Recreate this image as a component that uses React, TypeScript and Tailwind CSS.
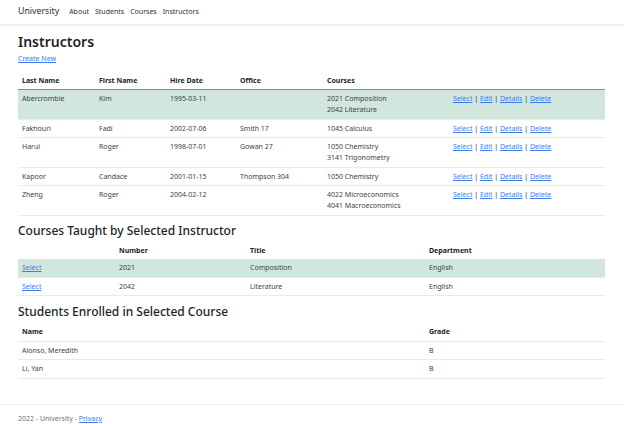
const instructors = [
  { last: 'Abercrombie', first: 'Kim', hired: '1995-03-11', office: '', courses: ['2021 Composition', '2042 Literature'], selected: true },
  { last: 'Fakhouri', first: 'Fadi', hired: '2002-07-06', office: 'Smith 17', courses: ['1045 Calculus'] },
  { last: 'Harui', first: 'Roger', hired: '1998-07-01', office: 'Gowan 27', courses: ['1050 Chemistry', '3141 Trigonometry'] },
  { last: 'Kapoor', first: 'Candace', hired: '2001-01-15', office: 'Thompson 304', courses: ['1050 Chemistry'] },
  { last: 'Zheng', first: 'Roger', hired: '2004-02-12', office: '', courses: ['4022 Microeconomics', '4041 Macroeconomics'] },
]

const courses = [
  { number: '2021', title: 'Composition', department: 'English', selected: true },
  { number: '2042', title: 'Literature', department: 'English' },
]

const students = [
  { name: 'Alonso, Meredith', grade: 'B' },
  { name: 'Li, Yan', grade: 'B' },
]

const cell = 'px-[4px] py-[3.25px] align-top leading-[11px]'
const head = 'px-[4px] py-[3.25px] text-left align-bottom font-bold leading-[11px] text-[#212529]'
const link = 'text-[#3b7bf0] underline'

function Actions() {
  return (
    <span className="text-[#212529]">
      <a className={link} href="#">Select</a> | <a className={link} href="#">Edit</a> |{' '}
      <a className={link} href="#">Details</a> | <a className={link} href="#">Delete</a>
    </span>
  )
}

export default function App() {
  return (
    <div className="flex flex-col bg-white text-[7px] text-[#3a3f44] [font-family:'Noto_Sans',sans-serif]">
      <nav className="flex h-[25px] items-center gap-[10px] border-b border-[#ececec] px-[18px] shadow-[0_1px_3px_rgba(0,0,0,0.06)]">
        <span className="text-[8.75px] text-[#2b2f33]">University</span>
        <div className="flex gap-[6px] text-[7px] text-[#2b2f33]">
          <span>About</span>
          <span>Students</span>
          <span>Courses</span>
          <span>Instructors</span>
        </div>
      </nav>

      <main className="mx-[18px] w-[587px]">
        <h1 className="mt-[7px] text-[14px] font-semibold leading-[19px] text-[#212529]">Instructors</h1>
        <a className={`mt-[1.5px] block leading-[11px] ${link}`} href="#">Create New</a>

        <table className="mt-[8px] w-full table-fixed border-collapse">
          <colgroup>
            <col className="w-[77px]" />
            <col className="w-[71px]" />
            <col className="w-[70px]" />
            <col className="w-[87px]" />
            <col className="w-[126px]" />
            <col />
          </colgroup>
          <thead>
            <tr className="border-b-[1.5px] border-[#8a8d90]">
              <th className={head}>Last Name</th>
              <th className={head}>First Name</th>
              <th className={head}>Hire Date</th>
              <th className={head}>Office</th>
              <th className={head}>Courses</th>
              <th className={head}></th>
            </tr>
          </thead>
          <tbody>
            {instructors.map((row) => (
              <tr key={row.last} className={`border-b border-[#e8eaec] ${row.selected ? 'bg-[#d1e7dd]' : ''}`}>
                <td className={cell}>{row.last}</td>
                <td className={cell}>{row.first}</td>
                <td className={cell}>{row.hired}</td>
                <td className={cell}>{row.office}</td>
                <td className={cell}>
                  {row.courses.map((c) => (
                    <div key={c}>{c}</div>
                  ))}
                </td>
                <td className={cell}>
                  <Actions />
                </td>
              </tr>
            ))}
          </tbody>
        </table>

        <h2 className="mt-[7px] text-[12px] font-medium leading-[16px] text-[#212529]">
          Courses Taught by Selected Instructor
        </h2>
        <table className="mt-[3px] w-full table-fixed border-collapse">
          <colgroup>
            <col className="w-[97px]" />
            <col className="w-[131px]" />
            <col className="w-[179px]" />
            <col />
          </colgroup>
          <thead>
            <tr>
              <th className={head}></th>
              <th className={head}>Number</th>
              <th className={head}>Title</th>
              <th className={head}>Department</th>
            </tr>
          </thead>
          <tbody>
            {courses.map((c) => (
              <tr key={c.number} className={`border-b border-[#e8eaec] ${c.selected ? 'bg-[#d1e7dd]' : ''}`}>
                <td className={cell}>
                  <a className={link} href="#">Select</a>
                </td>
                <td className={cell}>{c.number}</td>
                <td className={cell}>{c.title}</td>
                <td className={cell}>{c.department}</td>
              </tr>
            ))}
          </tbody>
        </table>

        <h2 className="mt-[8px] text-[12px] font-medium leading-[16px] text-[#212529]">
          Students Enrolled in Selected Course
        </h2>
        <table className="mt-[3px] w-full table-fixed border-collapse">
          <colgroup>
            <col className="w-[407px]" />
            <col />
          </colgroup>
          <thead>
            <tr className="border-b border-[#e8eaec]">
              <th className={head}>Name</th>
              <th className={head}>Grade</th>
            </tr>
          </thead>
          <tbody>
            {students.map((s) => (
              <tr key={s.name} className="border-b border-[#e8eaec]">
                <td className={cell}>{s.name}</td>
                <td className={cell}>{s.grade}</td>
              </tr>
            ))}
          </tbody>
        </table>
      </main>

      <footer className="mt-[25px] border-t border-[#ececec] px-[18px] pb-[3px] pt-[8.5px] leading-[11px] text-[#6c757d]">
        2022 - University - <a className={link} href="#">Privacy</a>
      </footer>
    </div>
  )
}
